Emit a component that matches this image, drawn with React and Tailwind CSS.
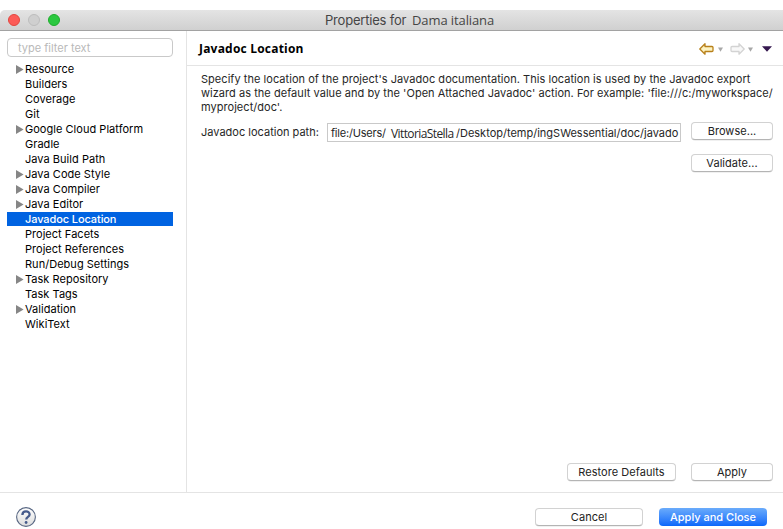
const items = [
  { label: "Resource", expandable: true },
  { label: "Builders" },
  { label: "Coverage" },
  { label: "Git" },
  { label: "Google Cloud Platform", expandable: true },
  { label: "Gradle" },
  { label: "Java Build Path" },
  { label: "Java Code Style", expandable: true },
  { label: "Java Compiler", expandable: true },
  { label: "Java Editor", expandable: true },
  { label: "Javadoc Location", selected: true },
  { label: "Project Facets" },
  { label: "Project References" },
  { label: "Run/Debug Settings" },
  { label: "Task Repository", expandable: true },
  { label: "Task Tags" },
  { label: "Validation", expandable: true },
  { label: "WikiText" },
];

function TreeItem({ label, expandable, selected }) {
  return (
    <li
      className={`mb-px flex h-[14px] items-center pl-[9px] leading-[14px] ${
        selected ? "bg-[#0063e1] font-medium tracking-[-0.1px] text-white" : "tracking-[0.03px] text-black"
      }`}
    >
      <span className="w-[9px] shrink-0">
        {expandable && (
          <svg width="8" height="9" viewBox="0 0 8 9" className="block">
            <path d="M0 0 L7.6 4.5 L0 9 Z" fill="#868686" />
          </svg>
        )}
      </span>
      <span>{label}</span>
    </li>
  );
}

function Button({ children, className = "" }) {
  return (
    <button
      className={`h-[18px] rounded-[4px] border border-[#d2d2d2] border-b-[#b4b4b4] bg-white text-center leading-[16px] tracking-[0.04px] text-[#222] shadow-[0_0.5px_0.5px_rgba(0,0,0,0.12)] ${className}`}
    >
      {children}
    </button>
  );
}

function Arrow({ fill, stroke, flip }) {
  return (
    <svg width="15" height="12" viewBox="0 0 15 12" className={flip ? "-scale-x-100" : ""}>
      <path
        d="M0.8 6 L6 0.8 V3.5 H13 Q14 3.5 14 4.5 V7.5 Q14 8.5 13 8.5 H6 V11.2 Z"
        fill={fill}
        stroke={stroke}
        strokeWidth="1.3"
        strokeLinejoin="round"
      />
    </svg>
  );
}

function Caret() {
  return (
    <svg width="5" height="5" viewBox="0 0 5 5">
      <path d="M0 0.5 H5 L2.5 4.8 Z" fill="#a8a8a8" />
    </svg>
  );
}

export default function App() {
  return (
    <div className="flex h-[529px] w-[783px] flex-col overflow-hidden bg-white pt-[10px] font-['Inter','Liberation_Sans',sans-serif] text-[11px] tracking-[0.04px] text-[#262626]">
      <header className="flex h-[21px] shrink-0 items-center rounded-tl-[5px] border-b border-[#a2a2a2] bg-linear-to-b from-[#e4e4e4] to-[#d0d0d0] pl-2">
        <div className="flex w-[317px] gap-2">
          <span className="size-3 rounded-full border border-[#e2463f] bg-[#fc5b57]" />
          <span className="size-3 rounded-full border border-[#bdbdbd] bg-[#cfcfcf]" />
          <span className="size-3 rounded-full border border-[#1dad2b] bg-[#2bc840]" />
        </div>
        <h1 className="flex whitespace-pre text-[13px] leading-5 text-[#454545]">
          <span className="w-[87px] tracking-[-0.2px]">Properties for </span>
          <span className="font-['Open_Sans','Noto_Sans',sans-serif] tracking-[-0.1px]">Dama italiana</span>
        </h1>
      </header>

      <div className="flex h-[461px] shrink-0">
        <aside className="w-[186px] shrink-0 pl-[7px] pt-[7px]">
          <div className="h-[19px] w-[166px] rounded-[4px] border border-[#c9c9c9] pl-[10px] leading-[18px] tracking-[0px] text-[#b9b9b9]">
            type filter text
          </div>
          <ul className="mt-[5px] w-[166px]">
            {items.map((item) => (
              <TreeItem key={item.label} {...item} />
            ))}
          </ul>
        </aside>

        <main className="flex min-w-0 flex-1 flex-col border-l border-[#e4e4e4]">
          <div className="flex h-[35px] shrink-0 items-center border-b border-[#e4e4e4] pl-[12px] pr-[11px]">
            <h2 className="flex-1 pt-px font-['Open_Sans','Noto_Sans',sans-serif] text-[12px] font-bold tracking-[0.2px] text-black">
              Javadoc Location
            </h2>
            <div className="flex items-center pt-[2px]">
              <Arrow fill="#fdf3c2" stroke="#b8801a" />
              <span className="ml-[4px] mr-[7px]"><Caret /></span>
              <Arrow fill="#f8f8f8" stroke="#d3d3d3" flip />
              <span className="ml-[3px] mr-[9px]"><Caret /></span>
              <svg width="10" height="6" viewBox="0 0 10 6">
                <path d="M0 0.3 H10 L5 5.8 Z" fill="#35184f" />
              </svg>
            </div>
          </div>

          <p className="mt-[6px] whitespace-nowrap pl-[14px] leading-[14px]">
            Specify the location of the project's Javadoc documentation. This location is used by the Javadoc export
            <br />
            wizard as the default value and by the 'Open Attached Javadoc' action. For example: 'file:///c:/myworkspace/
            <br />
            myproject/doc'.
          </p>

          <div className="mt-[8px] flex pl-[14px]">
            <label className="w-[126px] shrink-0 leading-[20px] tracking-[0px]">Javadoc location path:</label>
            <div className="mt-px flex h-[19px] w-[354px] items-center overflow-hidden whitespace-pre border border-[#c9c9c9] pl-[3px] pt-px leading-[17px]">
              <span className="w-[60px] shrink-0 tracking-[-0.2px]">file:/Users/</span>
              <span className="w-[65px] shrink-0 font-['Open_Sans','Noto_Sans',sans-serif] text-[12px] tracking-[-0.6px]">VittoriaStella</span>
              <span className="tracking-[0px]">/Desktop/temp/ingSWessential/doc/javado</span>
            </div>
            <div className="ml-[10px] flex flex-col gap-[14px]">
              <Button className="w-[82px]">Browse...</Button>
              <Button className="w-[82px]">Validate...</Button>
            </div>
          </div>

          <div className="mb-[11px] mt-auto flex justify-end gap-[15px] pr-[10px]">
            <Button className="w-[109px]">Restore Defaults</Button>
            <Button className="w-[82px]">Apply</Button>
          </div>
        </main>
      </div>

      <footer className="flex flex-1 items-start border-t border-[#e4e4e4] pl-[15px] pr-4 pt-[14px]">
        <svg width="22" height="22" viewBox="0 0 22 22">
          <defs>
            <linearGradient id="help" x1="0" y1="0" x2="0" y2="1">
              <stop offset="0" stopColor="#ffffff" />
              <stop offset="1" stopColor="#dcdcdc" />
            </linearGradient>
          </defs>
          <circle cx="11" cy="10" r="9.4" fill="url(#help)" stroke="#586783" strokeWidth="1.1" />
          <path d="M7.4 7.9 C7.4 3.4 14.6 3.4 14.6 7.4 C14.6 10 11.2 9.8 11.2 12.6" fill="none" stroke="#465b8b" strokeWidth="2.3" />
          <circle cx="11.1" cy="15.5" r="1.4" fill="#465b8b" />
        </svg>
        <div className="ml-auto flex gap-4 pt-px">
          <Button className="w-[108px]">Cancel</Button>
          <button className="h-[18px] w-[108px] rounded-[4px] bg-linear-to-b from-[#6aabfb] to-[#0867fa] text-center font-medium leading-[18px] tracking-[0px] text-white">
            Apply and Close
          </button>
        </div>
      </footer>
    </div>
  );
}
